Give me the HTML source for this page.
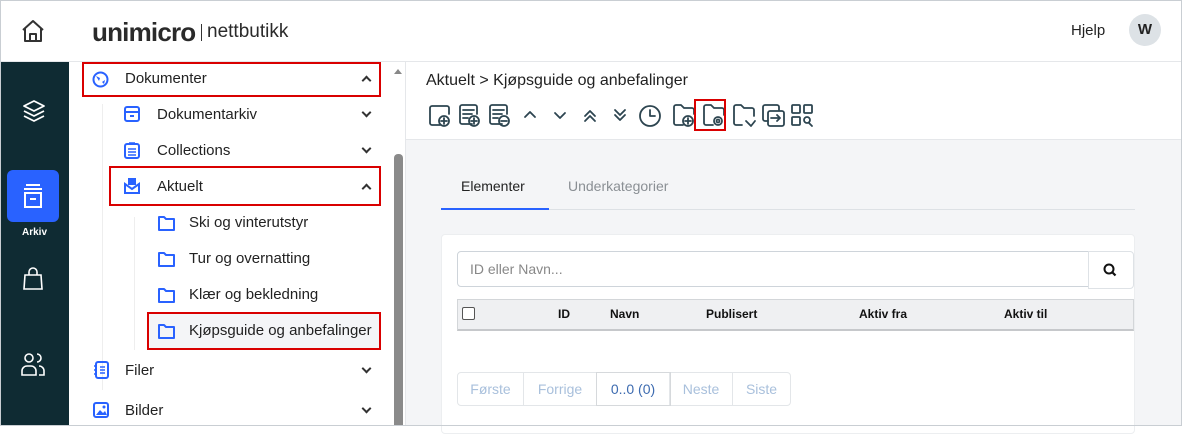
<!DOCTYPE html>
<html><head><meta charset="utf-8"><style>
*{box-sizing:border-box;margin:0;padding:0}
body{width:1182px;height:426px;overflow:hidden;font-family:"Liberation Sans",sans-serif;background:#fff;position:relative;color:#222}
.frame{position:absolute;inset:0;border:1px solid #c9ced3;pointer-events:none;z-index:10}
.header{position:absolute;left:0;top:0;width:1182px;height:62px;border-bottom:1px solid #e5e7ea;background:#fff}
.side{position:absolute;left:0;top:62px;width:69px;height:364px;background:#0f2b33}
.nav{position:absolute;left:69px;top:62px;width:322px;height:364px;background:#fff}
.scroll{position:absolute;left:391px;top:62px;width:15px;height:364px;background:#fff;border-right:1px solid #e5e7ea}
.content{position:absolute;left:406px;top:62px;width:776px;height:364px;background:#f4f5f7}
.item{position:absolute;font-size:15px;color:#222}
.chev{position:absolute;width:7px;height:7px;border-right:2px solid #333;border-bottom:2px solid #333}
.dn{transform:rotate(45deg)}.up{transform:rotate(-135deg)}
.red{position:absolute;border:2px solid #d90000}
.fold{position:absolute}
</style></head><body>
<div class="header">
 <svg style="position:absolute;left:20px;top:19px" width="26" height="24" viewBox="0 0 26 24"><path d="M3 11 L13 2 L23 11 M5 9 V22 H21 V9 M10 22 V15 H16 V22" fill="none" stroke="#333" stroke-width="2" stroke-linejoin="round"/></svg>
 <div style="position:absolute;left:92px;top:17px;font-size:26px;font-weight:bold;color:#2a2a2a;letter-spacing:-0.8px">unimicro</div>
 <div style="position:absolute;left:201px;top:24px;width:1px;height:17px;background:#333"></div>
 <div style="position:absolute;left:207px;top:21px;font-size:19px;color:#2a2a2a">nettbutikk</div>
 <div style="position:absolute;left:1071px;top:22px;font-size:15px;color:#222">Hjelp</div>
 <div style="position:absolute;left:1129px;top:14px;width:32px;height:32px;border-radius:50%;background:#dde2e6;text-align:center;line-height:32px;font-size:15px;font-weight:bold;color:#222">W</div>
</div>
<div class="side">
 <svg style="position:absolute;left:22px;top:37px" width="24" height="26" viewBox="0 0 24 26"><path d="M12 2 L22 7 L12 12 L2 7Z M2 12 L12 17 L22 12 M2 17 L12 22 L22 17" fill="none" stroke="#fff" stroke-width="1.8" stroke-linejoin="round"/></svg>
 <div style="position:absolute;left:7px;top:108px;width:52px;height:52px;border-radius:6px;background:#2962ff"></div>
 <svg style="position:absolute;left:21px;top:121px" width="24" height="26" viewBox="0 0 24 26"><path d="M5 2 H19 M3 6 H21 M4 10 H20 V24 H4Z M9 16 H15" fill="none" stroke="#fff" stroke-width="2"/></svg>
 <div style="position:absolute;left:0;width:69px;top:165px;text-align:center;font-size:10px;font-weight:bold;color:#fff">Arkiv</div>
 <svg style="position:absolute;left:22px;top:205px" width="22" height="24" viewBox="0 0 22 24"><path d="M3 8 H19 L20 22 H2Z M7 8 V5 A4 4 0 0 1 15 5 V8" fill="none" stroke="#fff" stroke-width="1.6"/></svg>
 <svg style="position:absolute;left:20px;top:289px" width="26" height="26" viewBox="0 0 26 26"><circle cx="9" cy="7" r="4" fill="none" stroke="#fff" stroke-width="1.6"/><path d="M2 24 V20 A5 5 0 0 1 7 15 H11 A5 5 0 0 1 16 20 V24Z M17 3 A4 4 0 0 1 17 11 M19 15 A5 5 0 0 1 24 20 V24 H19" fill="none" stroke="#fff" stroke-width="1.6"/></svg>
</div>
<div class="nav">
 <div style="position:absolute;left:33px;top:42px;width:1px;height:286px;background:#eee"></div>
 <div style="position:absolute;left:65px;top:155px;width:1px;height:133px;background:#eee"></div>
 <svg style="position:absolute;left:23px;top:9px" width="17" height="17" viewBox="0 0 17 17"><circle cx="8.5" cy="8.5" r="7" fill="none" stroke="#2962ff" stroke-width="2"/><path d="M4 5 L8 7 L7 10 Z M10 11 L13 9 L12 13Z" fill="#2962ff"/></svg>
 <div class="item" style="left:56px;top:8px">Dokumenter</div><div class="chev up" style="left:294px;top:15px"></div>
 <div class="red" style="left:13px;top:0;width:299px;height:35px"></div>
 <svg style="position:absolute;left:55px;top:44px" width="16" height="16" viewBox="0 0 16 16"><rect x="1" y="1" width="14" height="14" rx="2" fill="none" stroke="#2962ff" stroke-width="2"/><path d="M1 6 H15 M6 10 H10" stroke="#2962ff" stroke-width="2"/></svg>
 <div class="item" style="left:88px;top:44px">Dokumentarkiv</div><div class="chev dn" style="left:294px;top:47px"></div>
 <svg style="position:absolute;left:55px;top:80px" width="16" height="17" viewBox="0 0 16 17"><rect x="1" y="2" width="14" height="14" rx="2" fill="none" stroke="#2962ff" stroke-width="2"/><path d="M5 1 H11 M4 7 H12 M4 10 H12 M4 13 H12" stroke="#2962ff" stroke-width="1.6"/></svg>
 <div class="item" style="left:88px;top:80px">Collections</div><div class="chev dn" style="left:294px;top:83px"></div>
 <svg style="position:absolute;left:55px;top:115px" width="16" height="17" viewBox="0 0 16 17"><path d="M4 1 H12 V8 H4Z" fill="#2962ff"/><path d="M1 7 L8 12 L15 7 V16 H1Z" fill="none" stroke="#2962ff" stroke-width="2"/></svg>
 <div class="item" style="left:88px;top:116px">Aktuelt</div><div class="chev up" style="left:294px;top:123px"></div>
 <div class="red" style="left:40px;top:104px;width:272px;height:40px"></div>
 <div style="position:absolute;left:78px;top:250px;width:234px;height:38px;background:#f4f5f7"></div>
 <div class="red" style="left:78px;top:250px;width:234px;height:38px"></div>
 <svg class="fold" style="left:88px;top:153px" width="19" height="17" viewBox="0 0 19 17"><path d="M2 2 H7 L9 4 H17 V15 H2Z" fill="none" stroke="#2962ff" stroke-width="2" stroke-linejoin="round"/></svg>
 <div class="item" style="left:120px;top:152px">Ski og vinterutstyr</div>
 <svg class="fold" style="left:88px;top:189px" width="19" height="17" viewBox="0 0 19 17"><path d="M2 2 H7 L9 4 H17 V15 H2Z" fill="none" stroke="#2962ff" stroke-width="2" stroke-linejoin="round"/></svg>
 <div class="item" style="left:120px;top:188px">Tur og overnatting</div>
 <svg class="fold" style="left:88px;top:225px" width="19" height="17" viewBox="0 0 19 17"><path d="M2 2 H7 L9 4 H17 V15 H2Z" fill="none" stroke="#2962ff" stroke-width="2" stroke-linejoin="round"/></svg>
 <div class="item" style="left:120px;top:224px">Klær og bekledning</div>
 <svg class="fold" style="left:88px;top:261px" width="19" height="17" viewBox="0 0 19 17"><path d="M2 2 H7 L9 4 H17 V15 H2Z" fill="none" stroke="#2962ff" stroke-width="2" stroke-linejoin="round"/></svg>
 <div class="item" style="left:120px;top:260px">Kjøpsguide og anbefalinger</div>
 <svg style="position:absolute;left:24px;top:299px" width="16" height="18" viewBox="0 0 16 18"><rect x="3" y="1" width="12" height="16" rx="2" fill="none" stroke="#2962ff" stroke-width="2"/><path d="M1 5 H4 M1 9 H4 M1 13 H4 M7 6 H12 M7 9 H12 M7 12 H12" stroke="#2962ff" stroke-width="1.6"/></svg>
 <div class="item" style="left:56px;top:300px">Filer</div><div class="chev dn" style="left:294px;top:303px"></div>
 <svg style="position:absolute;left:24px;top:340px" width="16" height="16" viewBox="0 0 16 16"><rect x="1" y="1" width="14" height="14" rx="2" fill="none" stroke="#2962ff" stroke-width="2"/><path d="M3 13 L7 8 L10 11 L12 9 L14 13Z" fill="#2962ff"/><circle cx="11" cy="5" r="1.5" fill="#2962ff"/></svg>
 <div class="item" style="left:56px;top:340px">Bilder</div><div class="chev dn" style="left:294px;top:343px"></div>
</div>
<div class="scroll">
 <div style="position:absolute;left:3px;top:7px;width:0;height:0;border-left:4px solid transparent;border-right:4px solid transparent;border-bottom:5px solid #888"></div>
 <div style="position:absolute;left:3px;top:92px;width:9px;height:272px;background:#8a8a8a;border-radius:4px 4px 0 0"></div>
</div>
<div class="content">
 <div style="position:absolute;left:0;top:0;width:776px;height:78px;background:#fff;border-bottom:1px solid #e5e7ea"></div>
 <div style="position:absolute;left:20px;top:10px;font-size:16px;color:#222">Aktuelt &gt; Kjøpsguide og anbefalinger</div>
 <svg style="position:absolute;left:22px;top:40px" width="390" height="28" viewBox="0 0 390 28" fill="none" stroke="#2d4550" stroke-width="1.8" stroke-linecap="round" stroke-linejoin="round">
  <path d="M12 23 H4 A2 2 0 0 1 2 21 V6 A2 2 0 0 1 4 4 H19 A2 2 0 0 1 21 6 V12"/><circle cx="16" cy="19" r="5"/><path d="M16 16 V22 M13 19 H19"/>
  <path d="M44 22 H34 A2 2 0 0 1 32 20 V5 A2 2 0 0 1 34 3 H47 A2 2 0 0 1 49 5 V12 M35 8 H46 M35 12 H44 M35 16 H40"/><circle cx="46" cy="19" r="5"/><path d="M46 16 V22 M43 19 H49"/>
  <path d="M74 22 H64 A2 2 0 0 1 62 20 V5 A2 2 0 0 1 64 3 H77 A2 2 0 0 1 79 5 V12 M65 8 H76 M65 12 H74 M65 16 H70"/><circle cx="76" cy="19" r="5"/><path d="M73 19 H79"/>
  <path d="M97 15 L102 10 L107 15"/><path d="M127 11 L132 16 L137 11"/>
  <path d="M157 14 L162 9 L167 14 M157 19 L162 14 L167 19"/><path d="M187 8 L192 13 L197 8 M187 13 L192 18 L197 13"/>
  <circle cx="222" cy="14" r="10"/><path d="M222 8 V14 H227"/>
  <path d="M255 23 H248 A2 2 0 0 1 246 21 V5 A2 2 0 0 1 248 3 H253 L256 6 H264 A2 2 0 0 1 266 8 V12"/><circle cx="260" cy="19" r="5"/><path d="M260 16 V22 M257 19 H263"/>
  <path d="M285 23 H278 A2 2 0 0 1 276 21 V5 A2 2 0 0 1 278 3 H283 L286 6 H294 A2 2 0 0 1 296 8 V13"/><circle cx="290" cy="19" r="4"/><circle cx="290" cy="19" r="1.5"/>
  <path d="M314 23 H308 A2 2 0 0 1 306 21 V5 A2 2 0 0 1 308 3 H313 L316 6 H324 A2 2 0 0 1 326 8 V14 M318 19 L323 24 L327 19"/>
  <path d="M340 19 H337 A2 2 0 0 1 335 17 V5 A2 2 0 0 1 337 3 H349 A2 2 0 0 1 351 5 V8"/><rect x="340" y="9" width="16" height="15" rx="2"/><path d="M343 16 H352 M349 13 L352 16 L349 19"/>
  <rect x="364" y="3" width="8" height="8" rx="1"/><rect x="376" y="3" width="8" height="8" rx="1"/><rect x="364" y="15" width="8" height="8" rx="1"/><circle cx="379" cy="18" r="3"/><path d="M381 21 L384 24"/>
 </svg>
 <div class="red" style="left:288px;top:37px;width:32px;height:32px"></div>
 <div style="position:absolute;left:35px;top:147px;width:694px;height:1px;background:#dde1e5"></div>
 <div style="position:absolute;left:55px;top:116px;font-size:14px;color:#222">Elementer</div>
 <div style="position:absolute;left:35px;top:146px;width:108px;height:2px;background:#2962ff"></div>
 <div style="position:absolute;left:162px;top:116px;font-size:14px;color:#8a8f94">Underkategorier</div>
 <div style="position:absolute;left:35px;top:172px;width:694px;height:200px;background:#fff;border-radius:4px;border:1px solid #eceef0"></div>
 <div style="position:absolute;left:51px;top:189px;width:632px;height:36px;border:1px solid #ced4da;border-radius:4px 0 0 4px;background:#fff;font-size:14px;color:#888;padding:9px 12px">ID eller Navn...</div>
 <div style="position:absolute;left:682px;top:189px;width:46px;height:38px;border:1px solid #dee2e6;border-radius:0 4px 4px 0;background:#fff"></div>
 <svg style="position:absolute;left:697px;top:201px" width="14" height="14" viewBox="0 0 14 14"><circle cx="6" cy="6" r="4.5" fill="none" stroke="#111" stroke-width="2"/><path d="M9 9 L12.5 12.5" stroke="#111" stroke-width="2.2"/></svg>
 <div style="position:absolute;left:51px;top:237px;width:677px;height:32px;background:#eff0f2;border:1px solid #d3d6d9;border-bottom:2px solid #c6c8cb"></div>
 <div style="position:absolute;left:56px;top:245px;width:13px;height:13px;border:1px solid #555;border-radius:2px;background:#fff"></div>
 <div style="position:absolute;top:245px;font-size:12px;font-weight:bold;color:#111;left:0;width:776px">
  <span style="position:absolute;left:152px">ID</span><span style="position:absolute;left:204px">Navn</span><span style="position:absolute;left:300px">Publisert</span><span style="position:absolute;left:453px">Aktiv fra</span><span style="position:absolute;left:598px">Aktiv til</span></div>
 <div style="position:absolute;left:51px;top:310px;height:34px;display:flex;border:1px solid #e3e6e9;border-radius:4px;font-size:14px;color:#a9c0dc;line-height:32px;background:#fff">
  <div style="width:66px;text-align:center;border-right:1px solid #e3e6e9">Første</div>
  <div style="width:73px;text-align:center;border-right:1px solid #e3e6e9">Forrige</div>
  <div style="width:73px;text-align:center;border-right:1px solid #e3e6e9;color:#3d6bb0;outline:1px solid #d6d9dc">0..0 (0)</div>
  <div style="width:63px;text-align:center;border-right:1px solid #e3e6e9">Neste</div>
  <div style="width:57px;text-align:center">Siste</div>
 </div>
</div>
<div class="frame"></div>
</body></html>
